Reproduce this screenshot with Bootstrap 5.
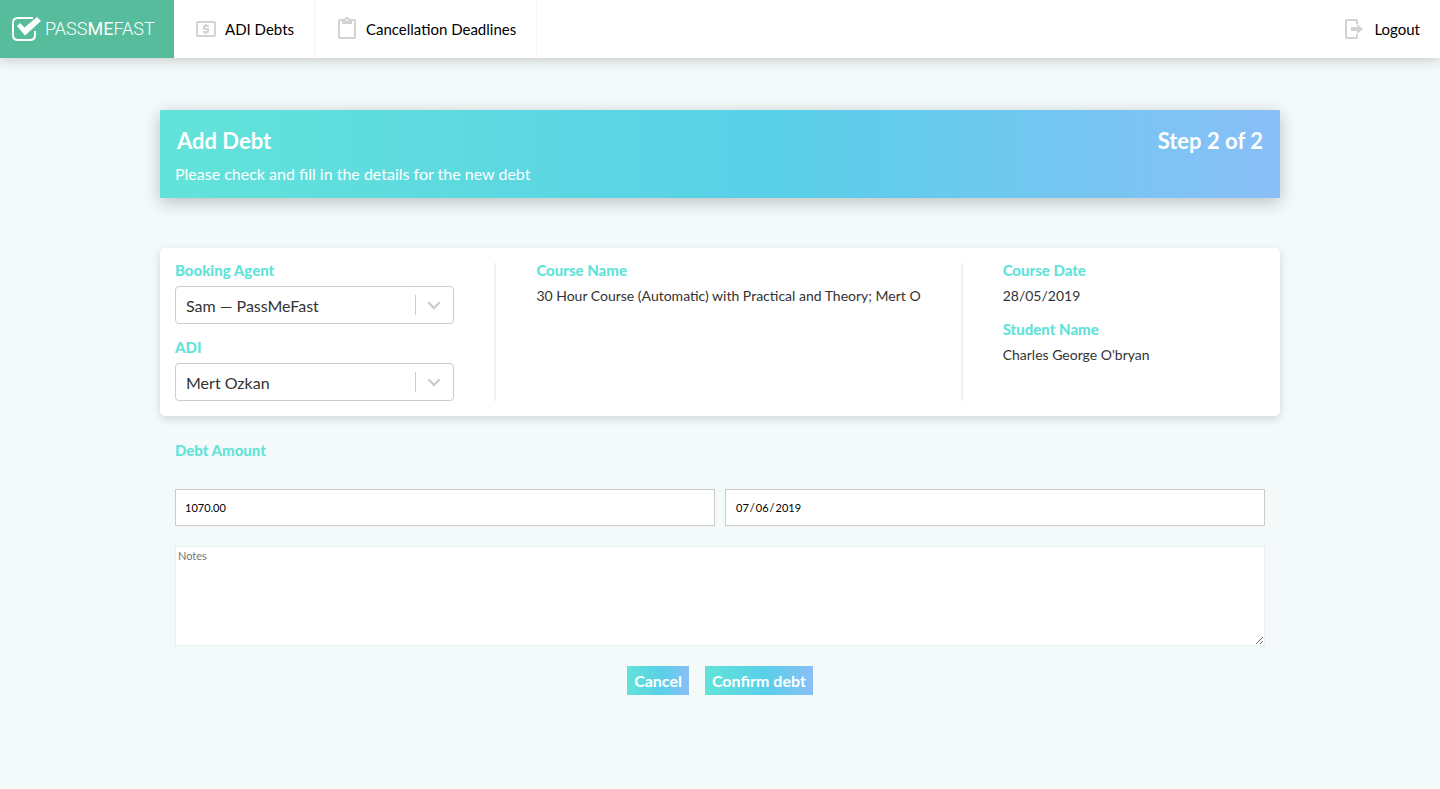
<!DOCTYPE html>
<html lang="en-GB">
<head>
<meta charset="utf-8">
<meta name="viewport" content="width=device-width, initial-scale=1">
<title>Add Debt</title>
<link href="https://cdn.jsdelivr.net/npm/bootstrap@5.3.0/dist/css/bootstrap.min.css" rel="stylesheet">
<style>
  body { font-family: Lato, sans-serif; background: #f4fafa; color: #000; }
  .topbar { background: #fff; min-height: 58px; font-size: 15px; box-shadow: 0 2px 12px rgba(0,0,0,.2); }
  .topbar a { color: #000; text-decoration: none; }
  .topbar svg { flex: none; fill: #d3d3d3; }
  .logo-link { background: #56bc9c; width: 174px; padding: 0 12px; gap: 4px; }
  .topbar .logo-link { color: #fff; }
  .logo-text { font: 300 18px/24px Roboto, "Liberation Sans", sans-serif; }
  .tab-link { padding: 0 20px; gap: 7px; border-right: 1px solid #fbf3f3; }
  .page { max-width: 1120px; padding-top: 52px; }
  .grad { background: linear-gradient(to right, #62e3d9, #59cfe8 56%, #89bff7); color: #fff; }
  .banner { padding: 16px 15px 12px; margin-bottom: 50px; box-shadow: 0 4px 16px rgba(0,0,0,.24); }
  .banner h1, .banner .step { font-size: 22px; line-height: 30px; font-weight: 700; margin: 0; padding: 0 2px; }
  .banner p { font-size: 16px; line-height: 24px; margin: 6px 0 0; }
  .details { background: #fff; border-radius: 5px; padding: 15px; box-shadow: 0 3px 9px rgba(0,0,0,.14); display: grid; grid-template-columns: 321fr auto 302fr; }
  .details > div { padding-left: 40px; }
  .details > div:first-child { padding-left: 0; }
  .details > div:not(:last-child) { padding-right: 40px; border-right: 2px solid #f1f1f1; }
  .field-name { display: block; color: #62e3d9; font-size: 15px; line-height: 14px; font-weight: 900; margin: 0 0 9px; }
  .details p { font-size: 14px; line-height: 20px; color: #333; margin: 0; }
  .details p + .field-name { margin-top: 16px; }
  .details .form-select { height: 38px; padding: 2px 44px 0 10px; font-size: 16px; line-height: 20px; color: #333; border: 1px solid #ccc; border-radius: 4px;
    background: #fff url("data:image/svg+xml,%3Csvg xmlns='http://www.w3.org/2000/svg' width='38' height='36'%3E%3Cpath d='M.5 8v20' stroke='%23ccc'/%3E%3Cpath d='M14 16l5 5 5-5' fill='none' stroke='%23ccc' stroke-width='2.4' stroke-linecap='round'/%3E%3C/svg%3E") no-repeat right center / 38px 36px; }
  .debt-form { padding: 27px 15px 0; }
  .amount-row { gap: 10px; padding-top: 23px; }
  .debt-form .form-control { border: 1px solid #ccc; border-radius: 0; color: #000; background: #fff; font-size: 11px; line-height: 16px; }
  .debt-form input.form-control { height: 37px; padding: 0 9px; }
  .debt-form textarea.form-control { height: 100px; padding: 1px 2px; border-color: #ebeeee; margin-top: 20px; }
  .debt-form textarea::placeholder { color: #757575; }
  input::-webkit-calendar-picker-indicator { display: none; }
  input::-webkit-datetime-edit-month-field, input::-webkit-datetime-edit-day-field, input::-webkit-datetime-edit-year-field { padding: 0 1px; }
  .act { border: 0; font-size: 16px; line-height: 21px; font-weight: 700; padding: 4px 7px; }
</style>
</head>
<body>
<nav class="topbar d-flex align-items-stretch position-relative" aria-label="Main">
  <a class="logo-link d-flex align-items-center" href="#" aria-label="PassMeFast">
    <svg width="29" height="26" viewBox="0 0 29 26"><path d="M21 2H6Q1 2 1 7v12q0 5 5 5h12q5 0 5-5v-4" fill="none" stroke="#fff" stroke-width="2"/><path d="M5 10l3-3 4.500 4.500L25 1l4 4-16 14.500z" fill="#fff"/></svg>
    <span class="logo-text">PASS<b>ME</b>FAST</span>
  </a>
  <a class="tab-link d-flex align-items-center" href="#">
    <svg width="24" height="24" viewBox="0 0 24 24"><path fill-rule="evenodd" d="M4 4h16q2 0 2 2v12q0 2-2 2H4q-2 0-2-2V6q0-2 2-2zm0 2v12h16V6z"/><path d="M11 17h2v-1h1q1 0 1-1v-3q0-1-1-1h-3v-1h4V8h-2V7h-2v1h-1q-1 0-1 1v3q0 1 1 1h3v1H9v2h2z"/></svg>
    <span>ADI Debts</span>
  </a>
  <a class="tab-link d-flex align-items-center" href="#">
    <svg width="24" height="24" viewBox="0 0 24 24"><path fill-rule="evenodd" d="M19 2h-4.200a3 3 0 0 0-5.600 0H5q-2 0-2 2v16q0 2 2 2h14q2 0 2-2V4q0-2-2-2zm-7 0a1 1 0 1 1 0 2 1 1 0 0 1 0-2zm7 18H5V4h2v3h10V4h2z"/></svg>
    <span>Cancellation Deadlines</span>
  </a>
  <a class="ms-auto d-flex align-items-center gap-2 px-3 me-1" href="#">
    <svg width="22" height="22" viewBox="0 0 22 22"><path d="M14 6V3q0-2-2-2H3Q1 1 1 3v16q0 2 2 2h9q2 0 2-2v-3h-2v3H3V3h9v3z"/><path d="M7 9h6V6l6 5-6 5v-3H7z"/></svg>
    <span>Logout</span>
  </a>
</nav>
<main class="page mx-auto">
  <header class="banner grad">
    <div class="d-flex justify-content-between"><h1>Add Debt</h1><div class="step">Step 2 of 2</div></div>
    <p>Please check and fill in the details for the new debt</p>
  </header>
  <form>
    <section class="details">
      <div>
        <label class="field-name" for="agent">Booking Agent</label>
        <select class="form-select" id="agent"><option>Sam — PassMeFast</option></select>
        <label class="field-name mt-3" for="adi">ADI</label>
        <select class="form-select" id="adi"><option>Mert Ozkan</option></select>
      </div>
      <div>
        <h2 class="field-name">Course Name</h2>
        <p>30 Hour Course (Automatic) with Practical and Theory; Mert O</p>
      </div>
      <div>
        <h2 class="field-name">Course Date</h2>
        <p>28/05/2019</p>
        <h2 class="field-name">Student Name</h2>
        <p>Charles George O'bryan</p>
      </div>
    </section>
    <section class="debt-form">
      <label class="field-name" for="amount">Debt Amount</label>
      <div class="amount-row d-flex">
        <input class="form-control" id="amount" type="text" inputmode="decimal" value="1070.00">
        <input class="form-control" type="date" value="2019-07-06" aria-label="Date">
      </div>
      <textarea class="form-control" placeholder="Notes" aria-label="Notes"></textarea>
      <div class="d-flex justify-content-center gap-3 py-3 mt-1">
        <button class="act grad" type="button">Cancel</button>
        <button class="act grad" type="submit">Confirm debt</button>
      </div>
    </section>
  </form>
</main>
<script src="https://cdn.jsdelivr.net/npm/bootstrap@5.3.0/dist/js/bootstrap.bundle.min.js"></script>
</body>
</html>
